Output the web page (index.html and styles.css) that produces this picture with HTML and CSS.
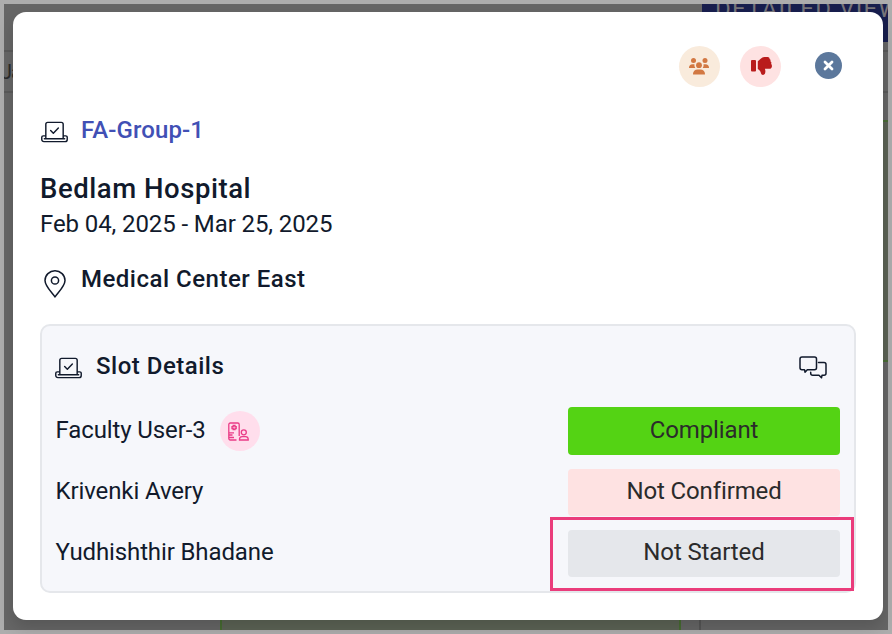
FILE: index.html
```
<!DOCTYPE html>
<html lang="en">
<head>
  <meta charset="UTF-8">
  <meta name="viewport" content="width=device-width, initial-scale=1">
  <title>Slot Details</title>
  <link rel="stylesheet" href="styles.css">
</head>
<body>

  <svg class="sprite" aria-hidden="true">
    <symbol id="laptop" viewBox="0 0 28 22">
      <path d="M5 17.5V3a2 2 0 0 1 2-2h14a2 2 0 0 1 2 2v14.500M4.300 15H2.300a1.500 1.500 0 0 0-1.500 1.500v2.300a2.200 2.200 0 0 0 2.200 2.200h22a2.200 2.200 0 0 0 2.200-2.200v-2.300a1.500 1.500 0 0 0-1.500-1.500h-2M3.500 18h21M10 9.500l2.800 2.700 5.200-5.400"/>
    </symbol>
  </svg>

  <!-- page behind the dialog -->
  <div class="backdrop">
    <div class="view-btn">DETAILED VIEW</div>
    <div class="month">Ja</div>
    <div class="line line-top"></div>
    <div class="cell cell-right"></div>
    <div class="cell cell-bottom"></div>
    <div class="divider"></div>
  </div>

  <div class="modal">
    <div class="actions">
      <div class="action group">
        <svg width="20" height="17" viewBox="0 0 20 17">
          <circle cx="4.500" cy="2.500" r="2.500"/>
          <circle cx="16" cy="2.500" r="2.500"/>
          <circle cx="10" cy="7.200" r="2.900"/>
          <path d="M0 10a3.600 3.600 0 0 1 3.500-3.700h2a5 5 0 0 0 .8 3.700zM20 10a3.600 3.600 0 0 0-3.500-3.700h-2a5 5 0 0 1-.8 3.700zM4 16a4.500 4.500 0 0 1 4.500-4.600h3A4.500 4.500 0 0 1 16 16q0 .5-.5.5h-11q-.5 0-.5-.5z"/>
        </svg>
      </div>
      <div class="action reject">
        <svg width="21" height="18" viewBox="0 0 21 18">
          <rect x="0" y="3" width="5" height="11.500" rx="1"/>
          <path d="M6.800 4.200 10 1.400Q11.600 0 13.500 0h3.200c1.300 0 2.100 1 1.800 2.100 1 .4 1.300 1.300.9 2.200 1 .5 1.300 1.500.7 2.500 1.500 1.300.9 4.900-1 4.900h-5.200c.4 1 .5 1.800.5 2.900 0 1.800-.9 3.400-2.300 3.400-1.600 0-2-1.300-2.500-3-.4-1.300-1.200-2-2.800-3.100z"/>
        </svg>
      </div>
      <div class="close">
        <svg width="11" height="11" viewBox="0 0 11 11"><path d="M2 2l7 7M9 2l-7 7"/></svg>
      </div>
    </div>

    <div class="group-row">
      <svg class="icon" width="27" height="22"><use href="#laptop"/></svg>
      <span class="group-name">FA-Group-1</span>
    </div>

    <div class="hospital">Bedlam Hospital</div>
    <div class="dates">Feb 04, 2025 - Mar 25, 2025</div>

    <div class="location">
      <svg class="icon" width="22" height="28" viewBox="0 0 22 28">
        <path d="M11 27C9 23.500 1 16.500 1 10.500a10 9.700 0 0 1 20 0C21 16.500 13 23.500 11 27z"/>
        <circle cx="11" cy="10.500" r="3.600"/>
      </svg>
      <span class="location-name">Medical Center East</span>
    </div>

    <div class="card">
      <div class="card-head">
        <svg class="icon" width="27" height="22"><use href="#laptop"/></svg>
        <span class="card-title">Slot Details</span>
        <svg class="icon chat" width="28" height="23" viewBox="0 0 28 23">
          <path d="M3 1h12.500a2 2 0 0 1 2 2v8.700a2 2 0 0 1-2 2H8.300L6 16.200l-.5-2.500H3a2 2 0 0 1-2-2V3a2 2 0 0 1 2-2zM19.500 6.500H25a2 2 0 0 1 2 2v8.800a2 2 0 0 1-2 2h-2l-.5 2.500-2.500-2.500h-6.300a2 2 0 0 1-2-2v-1"/>
        </svg>
      </div>

      <div class="slot">
        <span class="name">Faculty User-3</span>
        <div class="badge">
          <svg width="21" height="19" viewBox="0 0 21 19">
            <path d="M8.500 18H2.300A1.500 1.500 0 0 1 .8 16.500v-14A1.500 1.500 0 0 1 2.300 1h7.400a1.500 1.500 0 0 1 1.500 1.500V14M1 10.800h5M1 13h3.500M1 15.500h5M5.200 3.500h1.800v1.200h1.200v1.800H7v1.200H5.200V6.500H4V4.700h1.200zM11.500 18h8.700v-1a2.600 2.600 0 0 0-2.600-2.400h-3.500a2.600 2.600 0 0 0-2.600 2.400z"/>
            <circle cx="15.800" cy="10.300" r="2.500"/>
          </svg>
        </div>
        <div class="status compliant">Compliant</div>
      </div>
      <div class="slot">
        <span class="name">Krivenki Avery</span>
        <div class="status not-confirmed">Not Confirmed</div>
      </div>
      <div class="slot">
        <span class="name">Yudhishthir Bhadane</span>
        <div class="status not-started">Not Started</div>
      </div>
    </div>
  </div>

  <div class="highlight"></div>

</body>
</html>
```

FILE: styles.css
```
* {
  box-sizing: border-box;
}
body {
  margin: 0;
  width: 892px;
  height: 634px;
  padding: 12px 9px 14px 13px;
  position: relative;
  overflow: hidden;
  font-family: Roboto, sans-serif;
  font-size: 24px;
  letter-spacing: -0.12px;
  color: #111a2c;
}
svg {
  display: block;
  flex: none;
}
.sprite {
  position: absolute;
  width: 0;
  height: 0;
}
.icon {
  fill: none;
  stroke: #111a2c;
  stroke-width: 1.5;
  stroke-linecap: round;
  stroke-linejoin: round;
}
.backdrop {
  position: absolute;
  inset: 0;
  background: #666;
  border: 4px solid #adadad;
  overflow: hidden;
}
.view-btn {
  position: absolute;
  left: 698px;
  top: 0;
  width: 190px;
  height: 38px;
  padding-left: 13px;
  background: #181e4e;
  color: #77757a;
  font-size: 24px;
  line-height: 10px;
  letter-spacing: 1.2px;
  white-space: nowrap;
}
.month {
  position: absolute;
  left: -1px;
  top: 46px;
  width: 200px;
  height: 43px;
  border-top: 2px solid #5a5a5a;
  border-bottom: 2px solid #5a5a5a;
  font-size: 20px;
  line-height: 40px;
  letter-spacing: -1px;
  text-indent: -2px;
  color: #2b2b2b;
}
.line {
  position: absolute;
  height: 2px;
  background: #5a5a5a;
}
.line-top {
  left: 870px;
  top: 87px;
  width: 18px;
  box-shadow: 0 -41px #5a5a5a;
}
.cell {
  position: absolute;
  background: #5c6355;
}
.cell-right {
  left: 860px;
  top: 116px;
  width: 30px;
  height: 242px;
  border-top: 2px solid #4a6c36;
  border-bottom: 2px solid #4a6c36;
}
.cell-bottom {
  left: 216px;
  top: 560px;
  width: 461px;
  height: 80px;
  border-left: 2px solid #466b31;
  border-right: 2px solid #466b31;
}
.divider {
  position: absolute;
  left: 695px;
  top: 600px;
  width: 2px;
  height: 30px;
  background: #555;
}
.modal {
  position: relative;
  height: 608px;
  padding: 34px 27px 27px;
  border-radius: 13px;
  background: #fff;
  box-shadow: 0 8px 16px rgba(0, 0, 0, 0.15);
}
.actions {
  display: flex;
  justify-content: flex-end;
  padding-right: 14px;
}
.action {
  width: 41px;
  height: 41px;
  border-radius: 50%;
  display: flex;
  align-items: center;
  justify-content: center;
}
.group {
  background: #f9ebdc;
  fill: #d27842;
  margin-right: 20px;
  padding-right: 2px;
}
.reject {
  background: #fee2e2;
  fill: #b91c1c;
  margin-right: 34px;
  padding-left: 1px;
  padding-bottom: 1px;
}
.close {
  width: 27px;
  height: 27px;
  margin-top: 6px;
  border-radius: 50%;
  background: #5c789c;
  display: flex;
  align-items: center;
  justify-content: center;
}
.close path {
  stroke: #fff;
  stroke-width: 2.8;
  stroke-linecap: round;
}
.group-row {
  display: flex;
  align-items: center;
  gap: 13px;
  margin-top: 27px;
  padding-left: 1px;
  line-height: 32px;
}
.group-row .icon,
.card-head .icon {
  margin-top: 3px;
}
.group-name {
  font-weight: 500;
  letter-spacing: 0.1px;
  color: #4150b5;
}
.hospital {
  margin-top: 25px;
  font-size: 27.5px;
  font-weight: 500;
  line-height: 36px;
  letter-spacing: 0.55px;
}
.dates {
  margin-top: 1px;
  line-height: 32px;
  letter-spacing: -0.1px;
}
.location {
  display: flex;
  gap: 15px;
  margin-top: 23px;
  padding-left: 4px;
  line-height: 32px;
}
.location svg {
  margin-top: 7px;
}
.location-name,
.card-title {
  font-weight: 500;
  letter-spacing: 0.5px;
}
.card {
  margin-top: 26px;
  height: 269px;
  padding: 24px 14px 14px 13px;
  border: 2px solid #e5e7eb;
  border-radius: 10px;
  background: #f6f7fb;
}
.card-head {
  display: flex;
  align-items: center;
  gap: 14px;
  line-height: 32px;
  margin-bottom: 25px;
}
.chat {
  margin-left: auto;
  margin-right: 13px;
}
.slot {
  display: flex;
  align-items: center;
  height: 48px;
  margin-bottom: 13px;
}
.name {
  padding-left: 0.6px;
  padding-bottom: 2px;
}
.badge {
  width: 40px;
  height: 40px;
  margin-left: 14.4px;
  padding-right: 2px;
  border-radius: 50%;
  background: #ffdeec;
  display: flex;
  align-items: center;
  justify-content: center;
}
.badge svg {
  fill: none;
  stroke: #ea3c87;
  stroke-width: 1.3;
}
.status {
  width: 272px;
  height: 47px;
  margin-left: auto;
  border-radius: 4px;
  line-height: 44px;
  text-align: center;
  color: #2b2b2b;
}
.compliant {
  height: 48px;
  line-height: 46px;
  background: #54d314;
}
.not-confirmed {
  background: #fee2e2;
}
.not-started {
  background: #e5e7eb;
}
.highlight {
  position: absolute;
  left: 550px;
  top: 517px;
  width: 304px;
  height: 74px;
  border: 3px solid #ea3c7b;
}
```
